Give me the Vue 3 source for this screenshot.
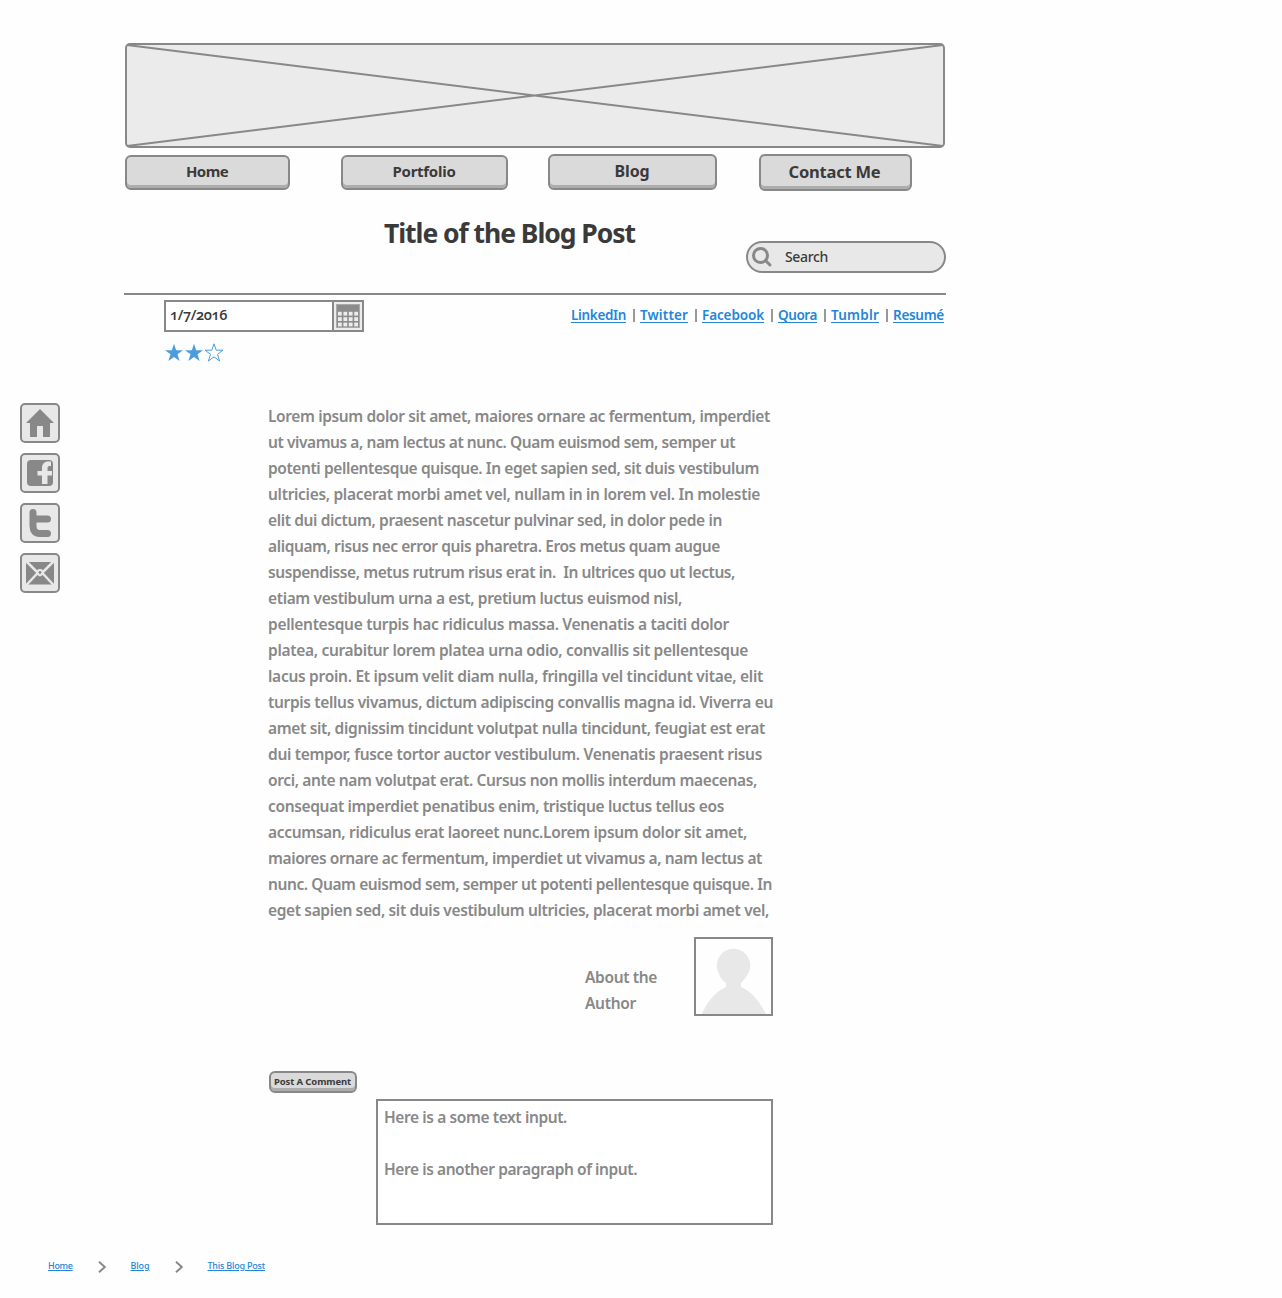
<script setup>
const nav = [
  { label: 'Home', cls: 'home', fit: 42 },
  { label: 'Portfolio', cls: 'portfolio', fit: 63 },
  { label: 'Blog', cls: 'blog', fit: 35 },
  { label: 'Contact Me', cls: 'contact', fit: 92 }
]

const links = [
  { label: 'LinkedIn', fit: 55 },
  { label: 'Twitter', fit: 48 },
  { label: 'Facebook', fit: 62 },
  { label: 'Quora', fit: 39 },
  { label: 'Tumblr', fit: 48 },
  { label: 'Resumé', fit: 51 }
]

const lines = [
  ['Lorem ipsum dolor sit amet, maiores ornare ac fermentum, imperdiet', 502],
  ['ut vivamus a, nam lectus at nunc. Quam euismod sem, semper ut', 467],
  ['potenti pellentesque quisque. In eget sapien sed, sit duis vestibulum', 491],
  ['ultricies, placerat morbi amet vel, nullam in in lorem vel. In molestie', 492],
  ['elit dui dictum, praesent nascetur pulvinar sed, in dolor pede in', 454],
  ['aliquam, risus nec error quis pharetra. Eros metus quam augue', 452],
  ['suspendisse, metus rutrum risus erat in.  In ultrices quo ut lectus,', 467],
  ['etiam vestibulum urna a est, pretium luctus euismod nisl,', 414],
  ['pellentesque turpis hac ridiculus massa. Venenatis a taciti dolor', 461],
  ['platea, curabitur lorem platea urna odio, convallis sit pellentesque', 480],
  ['lacus proin. Et ipsum velit diam nulla, fringilla vel tincidunt vitae, elit', 495],
  ['turpis tellus vivamus, dictum adipiscing convallis magna id. Viverra eu', 505],
  ['amet sit, dignissim tincidunt volutpat nulla tincidunt, feugiat est erat', 497],
  ['dui tempor, fusce tortor auctor vestibulum. Venenatis praesent risus', 494],
  ['orci, ante nam volutpat erat. Cursus non mollis interdum maecenas,', 489],
  ['consequat imperdiet penatibus enim, tristique luctus tellus eos', 456],
  ['accumsan, ridiculus erat laoreet nunc.Lorem ipsum dolor sit amet,', 479],
  ['maiores ornare ac fermentum, imperdiet ut vivamus a, nam lectus at', 494],
  ['nunc. Quam euismod sem, semper ut potenti pellentesque quisque. In', 504],
  ['eget sapien sed, sit duis vestibulum ultricies, placerat morbi amet vel,', 501]
]

const star = 'M10 0.8 12.2 7.2H19L13.5 11.3 15.6 18 10 13.9 4.4 18 6.5 11.3 1 7.2H7.8Z'

// Spreads the letters of an inline block over the given width.
const vFit = {
  mounted(el, { value }) {
    const natural = el.getBoundingClientRect().width
    el.style.letterSpacing = `${(value - natural) / el.textContent.length}px`
  }
}
</script>

<template>
  <div class="page">
    <header class="column">
      <svg class="hero" width="820" height="105" viewBox="0 0 820 105">
        <rect x="1" y="1" width="818" height="103" rx="4" />
        <path d="M2 2 818 103M818 2 2 103" />
      </svg>

      <nav class="nav">
        <button v-for="n in nav" :key="n.label" :class="['btn', n.cls]">
          <span v-fit="n.fit" class="fit">{{ n.label }}</span>
        </button>
      </nav>

      <div class="heading">
        <h1><span v-fit="251" class="fit">Title of the Blog Post</span></h1>
        <div class="search">
          <svg width="22" height="22" viewBox="0 0 22 22">
            <circle cx="9.5" cy="9.5" r="7" />
            <path d="M14.5 14.5 19 19" />
          </svg>
          <span v-fit="43" class="fit">Search</span>
        </div>
      </div>

      <div class="meta">
        <div class="date">
          <span class="value"><span v-fit="57" class="fit">1/7/2016</span></span>
          <span class="calendar">
            <svg width="24" height="24" viewBox="0 0 24 24">
              <rect width="24" height="24" fill="#aaa" />
              <rect x="1" y="1" width="22" height="22" fill="#8c8c8c" />
              <template v-for="r in 3" :key="r">
                <rect
                  v-for="c in 4"
                  :key="c"
                  :x="c * 5.4 - 3.4"
                  :y="r * 5.4 + 2.4"
                  width="3.8"
                  height="3.8"
                  fill="#ececec"
                />
              </template>
            </svg>
          </span>
        </div>
        <div class="links">
          <template v-for="(l, i) in links" :key="l.label">
            <i v-if="i" class="bar"></i>
            <a v-fit="l.fit" class="fit">{{ l.label }}</a>
          </template>
        </div>
      </div>

      <div class="stars">
        <svg v-for="i in 3" :key="i" width="20" height="20" viewBox="0 0 20 20">
          <path :d="star" :class="{ empty: i === 3 }" />
        </svg>
      </div>
    </header>

    <div class="body">
      <aside class="side">
        <span class="tile">
          <svg width="36" height="36" viewBox="0 0 36 36">
            <path d="M18 4 32 18H28V32H21V21H15V32H8V18H4Z" />
          </svg>
        </span>
        <span class="tile">
          <svg width="36" height="36" viewBox="0 0 36 36">
            <rect x="5" y="5" width="26" height="26" rx="4" />
            <path
              class="cut"
              d="M20 29V20.5H15.5V16H20V13C20 9 22.5 6.5 26 6.5H29V11H27.5C26 11 25.5 12 25.5 13.5V16H30V20.5H25.5V29Z"
            />
          </svg>
        </span>
        <span class="tile">
          <svg width="36" height="36" viewBox="0 0 36 36">
            <path class="bird" d="M11 7.5V21C11 26 13.5 28.5 17.5 28.5H25.5M11 14H25.5" />
          </svg>
        </span>
        <span class="tile">
          <svg width="36" height="36" viewBox="0 0 36 36">
            <rect x="4" y="7" width="28" height="22.5" />
            <path class="flap" d="M4 6 18 20 32 6M4 30.5 18 15.5 32 30.5" />
            <circle cx="18" cy="17.5" r="2.4" class="seal" />
          </svg>
        </span>
      </aside>

      <main class="article">
        <div class="text">
          <p v-for="(line, i) in lines" :key="i">
            <span v-fit="line[1]" class="fit">{{ line[0] }}</span>
          </p>
        </div>

        <section class="author">
          <div class="about">
            <p><span v-fit="72" class="fit">About the</span></p>
            <p><span v-fit="51" class="fit">Author</span></p>
          </div>
          <svg class="avatar" width="79" height="79" viewBox="0 0 79 79">
            <circle cx="39.5" cy="28.5" r="16.7" />
            <path
              d="M7 79C12 67 20 55 32 50V46C29 44 26 41 25 36H54C52 41 49 44 47 46V50C59 55 67 67 73 79Z"
            />
            <rect x="1" y="1" width="77" height="77" />
          </svg>
        </section>

        <button class="btn post"><span v-fit="77" class="fit">Post A Comment</span></button>

        <div class="comment">
          <p><span v-fit="183" class="fit">Here is a some text input.</span></p>
          <p></p>
          <p><span v-fit="253" class="fit">Here is another paragraph of input.</span></p>
        </div>
      </main>
    </div>

    <footer class="crumbs">
      <a v-fit="24.5" class="fit">Home</a>
      <svg width="8" height="12" viewBox="0 0 8 12"><path d="M1 .8 6.8 6 1 11.2" /></svg>
      <a v-fit="19" class="fit">Blog</a>
      <svg width="8" height="12" viewBox="0 0 8 12"><path d="M1 .8 6.8 6 1 11.2" /></svg>
      <a v-fit="57.5" class="fit">This Blog Post</a>
    </footer>
  </div>
</template>

<style>
body {
  margin: 0;
  background: #fefefe;
}
</style>

<style scoped>
.page {
  width: 1282px;
  height: 1298px;
  box-sizing: border-box;
  padding-top: 43px;
  overflow: hidden;
  font-family: 'Noto Sans', 'Open Sans', sans-serif;
  font-weight: 600;
  color: #3a3a3a;
}
p,
h1 {
  margin: 0;
}
svg {
  display: block;
  flex: none;
}
.fit {
  display: inline-block;
  white-space: pre;
}
.column {
  width: 822px;
  margin-left: 124px;
}
.hero {
  margin-left: 1px;
  fill: #ebebeb;
  stroke: #888;
  stroke-width: 2;
}
.nav {
  display: flex;
  align-items: flex-start;
  margin: 6px 0 0 1px;
  height: 37px;
}
.btn {
  box-sizing: border-box;
  flex: none;
  display: flex;
  align-items: center;
  justify-content: center;
  padding: 0 1px 2px 0;
  border: 2px solid #888;
  border-radius: 6px;
  background: #dadada;
  box-shadow: inset 0 -3px #adadad;
  color: #3a3a3a;
  font: inherit;
  font-weight: 700;
  line-height: 20px;
}
.home {
  width: 165px;
  height: 35px;
  margin: 1px 51px 0 0;
  padding-bottom: 3px;
  font-size: 15px;
}
.portfolio {
  width: 167px;
  height: 35px;
  margin: 1px 40px 0 0;
  padding-bottom: 3px;
  font-size: 15px;
}
.blog {
  width: 169px;
  height: 36px;
  margin-right: 42px;
  font-size: 16px;
}
.contact {
  width: 153px;
  height: 37px;
  padding-right: 2px;
  font-size: 16.5px;
}
.heading {
  display: flex;
  height: 102px;
  border-bottom: 2px solid #888;
}
h1 {
  width: 362px;
  margin: 24px 0 0 260px;
  font-size: 26.5px;
  line-height: 36px;
  font-weight: 700;
}
.search {
  box-sizing: border-box;
  display: flex;
  width: 200px;
  height: 32px;
  margin-top: 50px;
  padding: 3px 0 0 3px;
  border: 2px solid #888;
  border-radius: 16px;
  background: #e8e8e8;
  font-size: 14px;
  line-height: 21px;
  font-weight: 500;
}
.search svg {
  margin-right: 12px;
  fill: none;
  stroke: #888;
  stroke-width: 3;
  stroke-linecap: round;
}
.meta {
  display: flex;
  justify-content: space-between;
  margin-top: 5px;
}
.date {
  box-sizing: border-box;
  display: flex;
  width: 200px;
  height: 32px;
  margin-left: 40px;
  border: 2px solid #888;
  background: #fff;
}
.value {
  width: 162px;
  padding-left: 4px;
  font-family: 'Open Sans', 'Noto Sans', sans-serif;
  font-size: 14.5px;
  line-height: 26px;
  font-variant-numeric: oldstyle-nums;
}
.calendar {
  width: 24px;
  padding: 2px;
  border-left: 2px solid #888;
  background: #ececec;
}
.links {
  display: flex;
  width: 375px;
  height: 30px;
  align-items: center;
  font-size: 13.5px;
  line-height: 20px;
}
a {
  color: #2486d8;
  text-decoration: underline;
  text-decoration-thickness: 1px;
  text-underline-offset: 2px;
}
.bar {
  width: 2px;
  height: 13px;
  margin: 1px 5px 0 7px;
  background: #999;
}
.stars {
  display: flex;
  margin: 11px 0 0 40px;
}
.stars path {
  fill: #4d9ddb;
}
.stars .empty {
  fill: #fff;
  stroke: #4d9ddb;
}
.body {
  display: flex;
  margin-top: 40px;
}
.side {
  display: flex;
  flex-direction: column;
  gap: 10px;
  width: 40px;
  margin-left: 20px;
}
.tile {
  width: 36px;
  height: 36px;
  border: 2px solid #888;
  border-radius: 5px;
  background: #e8e8e8;
}
.tile svg {
  fill: #888;
}
.tile .cut {
  fill: #e8e8e8;
}
.tile .bird {
  fill: none;
  stroke: #888;
  stroke-width: 7;
  stroke-linecap: round;
  stroke-linejoin: round;
}
.tile .flap {
  fill: none;
  stroke: #e8e8e8;
  stroke-width: 2.5;
}
.tile .seal {
  fill: #888;
  stroke: #e8e8e8;
  stroke-width: 2;
}
.article {
  width: 505px;
  margin-left: 208px;
  color: #888;
  font-size: 15.5px;
}
.article p {
  height: 26px;
  line-height: 26px;
}
.author {
  display: flex;
  justify-content: flex-end;
  margin-top: 14px;
}
.about {
  width: 109px;
  padding-top: 27px;
}
.avatar {
  fill: #e8e8e8;
}
.avatar rect {
  fill: none;
  stroke: #888;
  stroke-width: 2;
}
.post {
  width: 88px;
  height: 22px;
  margin: 55px 0 0 1px;
  padding-bottom: 1px;
  font-size: 9.5px;
  line-height: 14px;
}
.comment {
  box-sizing: border-box;
  width: 397px;
  height: 126px;
  margin: 6px 0 0 108px;
  padding: 3px 6px;
  border: 2px solid #888;
  background: #fff;
}
.crumbs {
  display: flex;
  align-items: center;
  height: 16px;
  margin: 33px 0 0 48px;
  font-size: 9px;
  line-height: 14px;
  font-weight: 500;
}
.crumbs svg {
  margin: 2px 24.5px 0 25.5px;
  fill: none;
  stroke: #888;
  stroke-width: 2;
}
.crumbs a {
  text-underline-offset: 1px;
}
</style>
